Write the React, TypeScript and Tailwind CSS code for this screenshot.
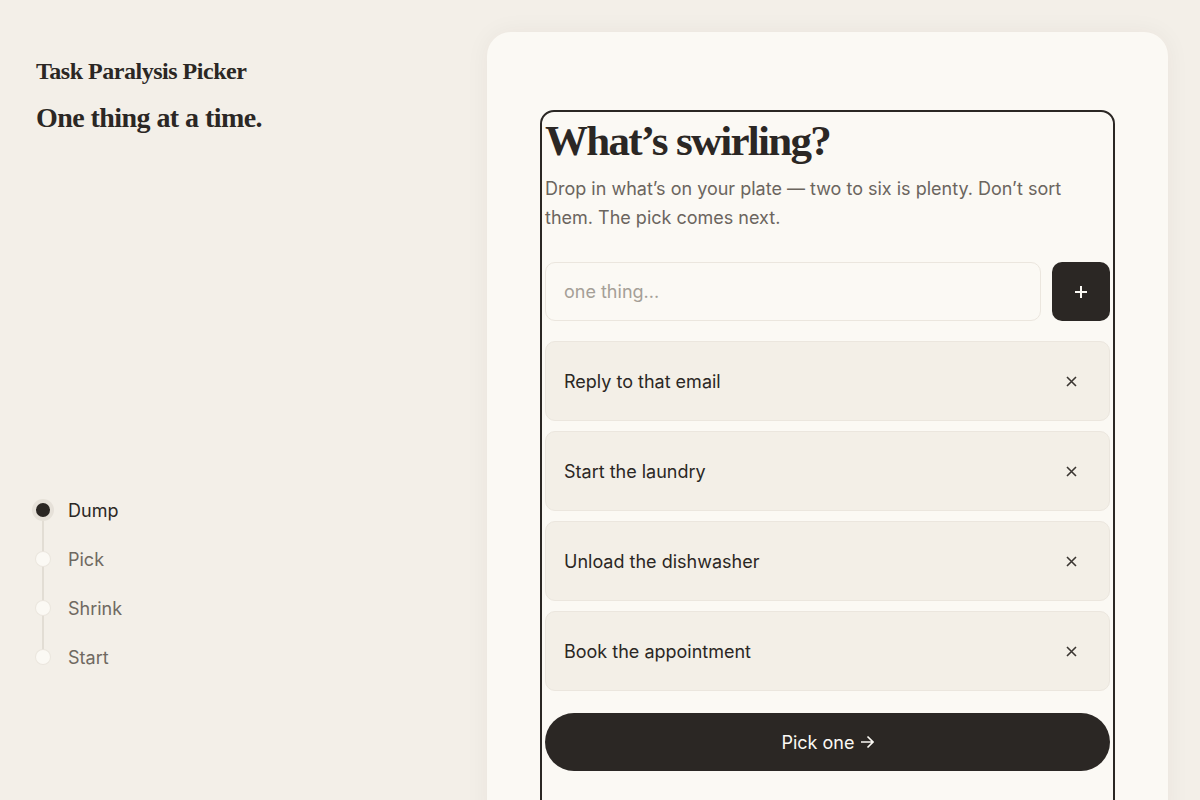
import React, { useState } from 'react';

const serif = { fontFamily: '"Liberation Serif", "DejaVu Serif", serif' };

const steps = ['Dump', 'Pick', 'Shrink', 'Start'];

export default function App() {
    const [items, setItems] = useState([
        'Reply to that email',
        'Start the laundry',
        'Unload the dishwasher',
        'Book the appointment',
    ]);
    const [draft, setDraft] = useState('');

    const add = () => {
        if (!draft.trim()) return;
        setItems([...items, draft.trim()]);
        setDraft('');
    };

    return (
        <div
            className="w-[1200px] h-[800px] overflow-hidden bg-[#f3efe8] text-[#2b2724] flex"
            style={{ fontFamily: 'Inter, "DejaVu Sans", sans-serif' }}
        >
            {/* LEFT RAIL */}
            <aside className="w-[487px] shrink-0 pl-9 pt-[55px] flex flex-col">
                <h1 className="text-[24px] leading-[32px] font-bold tracking-[-0.02em]" style={serif}>
                    Task Paralysis Picker
                </h1>
                <p className="mt-[13px] text-[28px] leading-[36px] font-bold tracking-[-0.02em]" style={serif}>
                    One thing at a time.
                </p>

                <ol className="mt-[361px] relative flex flex-col gap-[23px]">
                    <div className="absolute left-[6px] top-[12px] h-[147px] w-[2px] bg-[#e2ddd4]"></div>
                    {steps.map((s, i) => (
                        <li key={s} className="relative flex items-center gap-[18px] h-[26px]">
                            <span
                                className={
                                    i === 0
                                        ? 'w-[14px] h-[14px] rounded-full bg-[#2b2724] ring-4 ring-[#e6e1d9]'
                                        : 'w-[14px] h-[14px] rounded-full bg-[#fbf9f4] ring-1 ring-[#ebe6de]'
                                }
                            ></span>
                            <span className={i === 0 ? 'text-[18px] text-[#2b2724]' : 'text-[18px] text-[#6f6961]'}>
                                {s}
                            </span>
                        </li>
                    ))}
                </ol>
            </aside>

            {/* MAIN PANEL */}
            <main className="mt-8 mr-8 flex-1 h-[800px] rounded-[24px] bg-[#fbf9f4] shadow-[0_0_24px_rgba(60,40,20,0.05)] pt-[78px] px-[53px]">
                <section className="border-2 border-[#2b2724] rounded-t-[14px] h-[800px] px-[3px]">
                    <h2 className="text-[43px] leading-[52px] font-bold tracking-[-0.04em] pt-[3px]" style={serif}>
                        What’s swirling?
                    </h2>
                    <p className="mt-[7px] text-[18px] leading-[29px] text-[#6b655e] pr-[40px]">
                        Drop in what’s on your plate — two to six is plenty. Don’t sort them. The pick comes next.
                    </p>

                    <div className="mt-[30px] flex gap-[11px]">
                        <input
                            value={draft}
                            onChange={(e) => setDraft(e.target.value)}
                            onKeyDown={(e) => e.key === 'Enter' && add()}
                            placeholder="one thing..."
                            className="flex-1 h-[59px] rounded-[10px] border border-[#ebe6de] bg-[#fbf9f4] px-[18px] text-[18px] outline-none placeholder:text-[#a59f97]"
                        />
                        <button
                            onClick={add}
                            className="w-[58px] h-[59px] rounded-[10px] bg-[#2b2724] text-[#fbf9f4] flex items-center justify-center"
                        >
                            <svg width="14" height="14" viewBox="0 0 14 14" fill="none" stroke="currentColor" strokeWidth="2">
                                <path d="M7 1v12M1 7h12" />
                            </svg>
                        </button>
                    </div>

                    <ul className="mt-[20px] flex flex-col gap-[10px]">
                        {items.map((t, i) => (
                            <li
                                key={i}
                                className="h-[80px] rounded-[10px] bg-[#f3efe7] border border-[#ebe6de] pl-[18px] pr-[32px] flex items-center justify-between text-[18px]"
                            >
                                <span>{t}</span>
                                <button
                                    onClick={() => setItems(items.filter((_, j) => j !== i))}
                                    className="text-[#3a3531]"
                                >
                                    <svg width="11" height="11" viewBox="0 0 11 11" fill="none" stroke="currentColor" strokeWidth="1.6">
                                        <path d="M1 1l9 9M10 1l-9 9" />
                                    </svg>
                                </button>
                            </li>
                        ))}
                    </ul>

                    <button className="mt-[22px] w-full h-[58px] rounded-full bg-[#2b2724] text-[#fbf9f4] text-[18px] flex items-center justify-center gap-[5px]">
                        Pick one
                        <svg width="14" height="14" viewBox="0 0 14 14" fill="none" stroke="currentColor" strokeWidth="1.6">
                            <path d="M1 7h12M7.5 1.5L13 7l-5.5 5.5" />
                        </svg>
                    </button>
                </section>
            </main>
        </div>
    );
}
